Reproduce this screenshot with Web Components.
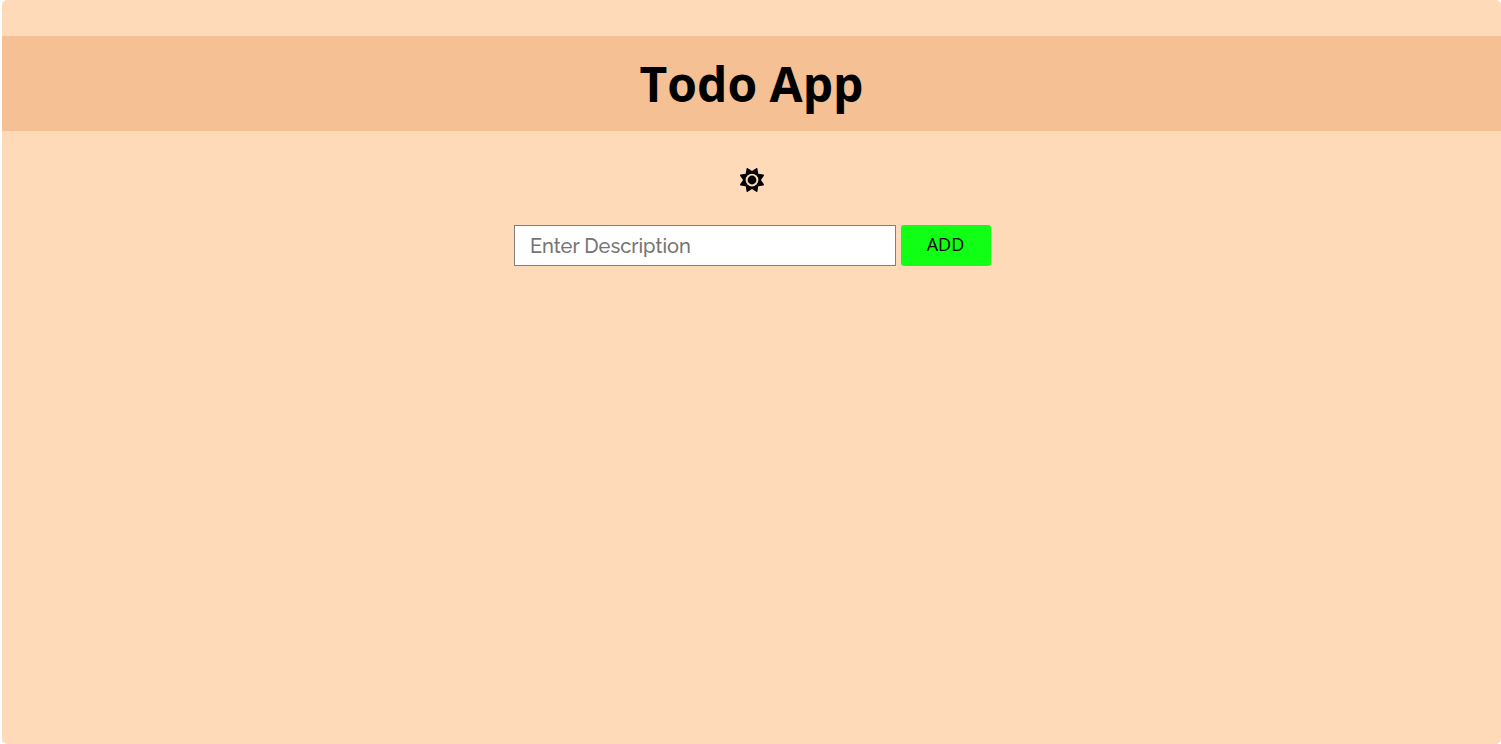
<!DOCTYPE html>
<html lang="en">
<head>
<meta charset="utf-8">
<title>Todo App</title>
<style>
  html { background: #fff; }
  body { margin: 0; }
</style>
</head>
<body>
<todo-app>
  <todo-header>Todo App</todo-header>
  <theme-toggle></theme-toggle>
  <todo-form></todo-form>
</todo-app>
<script>
const define = (name, markup) => {
  const template = document.createElement('template');
  template.innerHTML = markup;
  customElements.define(name, class extends HTMLElement {
    constructor() {
      super();
      this.attachShadow({ mode: 'open' }).append(template.content.cloneNode(true));
    }
  });
};

define('todo-app', `
  <style>
    :host {
      display: flex; flex-direction: column;
      box-sizing: border-box; min-height: 100vh;
      margin-left: 2px; padding-top: 36px;
      background: #ffdab9; border-radius: 5px; color: #000;
      font-family: "Open Sans", "Noto Sans", sans-serif;
    }
  </style>
  <slot></slot>`);

define('todo-header', `
  <style>
    :host { display: block; background: #f5c094; }
    h1 {
      margin: 0; padding: 16px 0 15px; text-align: center;
      font-size: 48px; line-height: 64px; font-weight: 700;
    }
  </style>
  <h1><slot></slot></h1>`);

define('theme-toggle', `
  <style>
    :host { display: flex; justify-content: center; margin: 37px 0 33px; }
    button { display: block; margin: 0; padding: 0; border: 0; background: none; color: inherit; cursor: pointer; }
    svg { display: block; width: 24px; height: 24px; fill: currentColor; }
  </style>
  <button type="button" aria-label="Toggle theme">
    <svg viewBox="0 0 512 512" aria-hidden="true"><path d="M361.5 1.2c5 2.1 8.6 6.6 9.6 11.9L391 121l107.9 19.8c5.3 1 9.8 4.6 11.9 9.6s1.5 10.7-1.6 15.2L446.9 256l62.3 90.3c3.1 4.5 3.7 10.2 1.6 15.2s-6.6 8.6-11.9 9.6L391 391 371.1 498.9c-1 5.3-4.6 9.8-9.6 11.9s-10.7 1.5-15.2-1.6L256 446.9l-90.3 62.3c-4.5 3.1-10.2 3.7-15.2 1.6s-8.6-6.6-9.6-11.9L121 391 13.1 371.1c-5.3-1-9.8-4.6-11.9-9.6s-1.5-10.7 1.6-15.2L65.1 256 2.8 165.7c-3.1-4.5-3.7-10.2-1.6-15.2s6.6-8.6 11.9-9.6L121 121 140.9 13.1c1-5.3 4.6-9.8 9.6-11.9s10.7-1.5 15.2 1.6L256 65.1 346.3 2.8c4.5-3.1 10.2-3.7 15.2-1.6zM162 256a94 94 0 1 1 188 0 94 94 0 1 1 -188 0zm230 0a136 136 0 1 0 -272 0 136 136 0 1 0 272 0z"/></svg>
  </button>`);

define('todo-form', `
  <style>
    :host { display: block; }
    form { display: flex; justify-content: center; gap: 5px; padding-left: 2px; }
    input, button { box-sizing: border-box; height: 41px; margin: 0; }
    input {
      width: 382px; min-width: 0; padding: 0 15px;
      border: 1px solid #808080; border-radius: 0; background: #fff;
      color: #000; font: 500 20px Raleway, Lato, "Open Sans", sans-serif;
    }
    input::placeholder { color: #757575; }
    button {
      width: 90px; padding: 0 1px 3px 0; border: 0; border-radius: 3px;
      background: #10ff15; color: #000;
      font: 18px "Open Sans", "Noto Sans", sans-serif; cursor: pointer;
    }
  </style>
  <form>
    <input type="text" placeholder="Enter Description" aria-label="Enter Description">
    <button type="button">ADD</button>
  </form>`);
</script>
</body>
</html>
